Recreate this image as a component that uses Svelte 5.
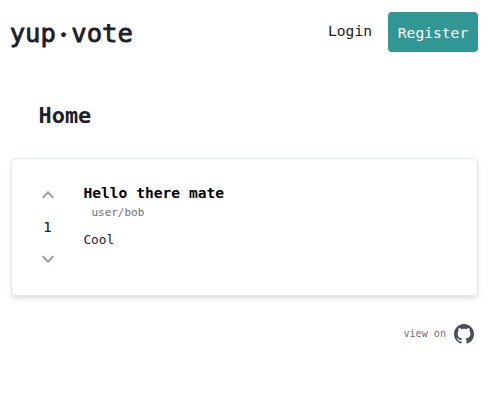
<script>
  const user = 'bob';
  let votes = $state(1);
</script>

<div class="page">
  <header>
    <div class="brand">yup<span class="dot">·</span>vote</div>
    <nav>
      <span class="login">Login</span>
      <button class="register">Register</button>
    </nav>
  </header>

  <h1>Home</h1>

  <article class="card">
    <div class="votes">
      <button class="arrow" aria-label="Upvote" onclick={() => votes++}>
        <svg viewBox="0 0 24 24"><path d="M12 8 6 14l1.4 1.4 4.6-4.6 4.6 4.6L18 14z" /></svg>
      </button>
      <span class="count">{votes}</span>
      <button class="arrow" aria-label="Downvote" onclick={() => votes--}>
        <svg viewBox="0 0 24 24"><path d="M12 16 6 10l1.4-1.4 4.6 4.6 4.6-4.6L18 10z" /></svg>
      </button>
    </div>
    <div class="post">
      <h2>Hello there mate</h2>
      <div class="author">user/{user}</div>
      <p>Cool</p>
    </div>
  </article>

  <footer>
    <span>view on</span>
    <svg class="github" viewBox="0 0 16 16"><path d="M8 0C3.58 0 0 3.58 0 8c0 3.54 2.29 6.53 5.47 7.59.4.07.55-.17.55-.38 0-.19-.01-.82-.01-1.49-2.01.37-2.53-.49-2.69-.94-.09-.23-.48-.94-.82-1.13-.28-.15-.68-.52-.01-.53.63-.01 1.08.58 1.23.82.72 1.21 1.87.87 2.33.66.07-.52.28-.87.51-1.07-1.78-.2-3.64-.89-3.64-3.95 0-.87.31-1.59.82-2.15-.08-.2-.36-1.02.08-2.12 0 0 .67-.21 2.2.82.64-.18 1.32-.27 2-.27s1.36.09 2 .27c1.53-1.04 2.2-.82 2.2-.82.44 1.1.16 1.92.08 2.12.51.56.82 1.27.82 2.15 0 3.07-1.87 3.75-3.65 3.95.29.25.54.73.54 1.48 0 1.07-.01 1.93-.01 2.2 0 .21.15.46.55.38A8.01 8.01 0 0 0 16 8c0-4.42-3.58-8-8-8z" /></svg>
  </footer>
</div>

<style>
  :global(body) {
    background: #fff;
  }
  .page {
    box-sizing: border-box;
    width: 488px;
    height: 417px;
    padding: 12px 10px 0 11px;
    overflow: hidden;
    font-family: 'DejaVu Sans Mono', monospace;
    font-size: 14.62px;
    color: #1a202c;
  }
  header {
    display: flex;
    justify-content: space-between;
    height: 40px;
  }
  .brand {
    margin-left: -1.3px;
    font-size: 25.58px;
    line-height: 42px;
    -webkit-text-stroke: 0.8px #1a202c;
  }
  .dot {
    display: inline-block;
    width: 15.4px;
    font-family: Lato, sans-serif;
    font-weight: 700;
    line-height: 1;
    text-align: center;
    -webkit-text-stroke: 0;
  }
  nav {
    display: flex;
    gap: 16px;
  }
  .login {
    line-height: 37px;
  }
  button {
    border: 0;
    padding: 0;
    font: inherit;
    background: none;
  }
  .register {
    width: 90px;
    height: 40px;
    border-radius: 4px;
    background: #319795;
    color: #fff;
  }
  h1 {
    margin: 46px 0 0 27.5px;
    font-size: 21.93px;
    line-height: 36px;
  }
  .card {
    box-sizing: border-box;
    display: flex;
    height: 138px;
    margin-top: 24px;
    padding-left: 24px;
    border: 1px solid #e2e8f0;
    border-radius: 4px;
    box-shadow: 0 4px 6px -1px rgba(0, 0, 0, 0.1), 0 2px 4px -1px rgba(0, 0, 0, 0.06);
  }
  .votes {
    display: flex;
    flex-direction: column;
    align-items: center;
    width: 24px;
    padding-top: 24px;
  }
  .arrow {
    width: 24px;
    height: 24px;
  }
  .arrow svg {
    display: block;
    width: 24px;
    height: 24px;
    fill: #a39a9f;
  }
  .count {
    margin-left: -1px;
    line-height: 40px;
  }
  .post {
    padding: 22px 0 0 23.4px;
  }
  h2 {
    margin: 0;
    font-size: 14.62px;
    line-height: 24px;
    color: #000;
  }
  .author {
    margin: 1px 0 0 8.1px;
    font-size: 10.96px;
    line-height: 14px;
    color: #68707d;
  }
  p {
    margin: 9px 0 0;
    font-size: 12.79px;
    line-height: 21px;
  }
  footer {
    display: flex;
    justify-content: flex-end;
    align-items: center;
    gap: 8px;
    margin: 28px 4px 0 0;
    font-size: 10.1px;
    line-height: 20px;
    color: #68707d;
  }
  .github {
    width: 20px;
    height: 20px;
    fill: #4a4e57;
  }
</style>
